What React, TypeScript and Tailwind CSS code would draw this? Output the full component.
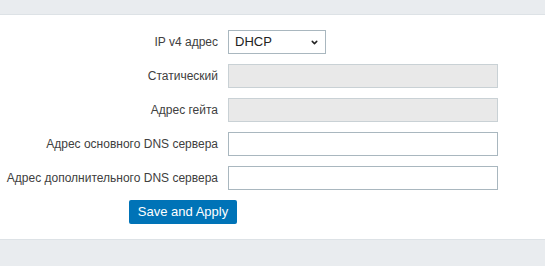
import { ChevronDown } from "lucide-react";

const rows = [
  { label: "Статический", disabled: true },
  { label: "Адрес гейта", disabled: true },
  { label: "Адрес основного DNS сервера", disabled: false },
  { label: "Адрес дополнительного DNS сервера", disabled: false },
];

export default function App() {
  return (
    <div className="flex h-[266px] w-[545px] flex-col bg-white font-['Liberation_Sans',Arial,sans-serif] text-[#404040]">
      {/* top strip */}
      <div className="h-[15px] shrink-0 border-b border-[#dde2e6] bg-[#e9ecef]" />

      <div className="flex-1 pt-[15px]">
        <div className="grid grid-cols-[218px_270px] gap-x-[10px] gap-y-[10px]">
          <label className="flex h-[24px] items-center justify-end text-[12px]">IP v4 адрес</label>
          <div className="relative flex h-[24px] w-[98px] items-center border border-[#a9b7bf] bg-white pl-[6px] text-[13px] text-[#222]">
            DHCP
            <ChevronDown className="absolute right-[6px] top-[7px] h-[9px] w-[9px]" strokeWidth={4} />
          </div>

          {rows.map((r) => (
            <div key={r.label} className="contents">
              <label className="flex h-[24px] items-center justify-end text-[12px]">{r.label}</label>
              <input
                disabled={r.disabled}
                className={`h-[24px] w-[270px] border outline-none ${
                  r.disabled ? "border-[#c9d1d5] bg-[#e9e9e9]" : "border-[#a9b7bf] bg-white"
                }`}
              />
            </div>
          ))}
        </div>

        <button className="ml-[129px] mt-[10px] h-[24px] w-[108px] rounded-[2px] bg-[#0073b7] text-[13px] text-white">
          Save and Apply
        </button>
      </div>

      {/* bottom strip */}
      <div className="h-[27px] shrink-0 border-t border-[#dde2e6] bg-[#e9ecef]" />
    </div>
  );
}
